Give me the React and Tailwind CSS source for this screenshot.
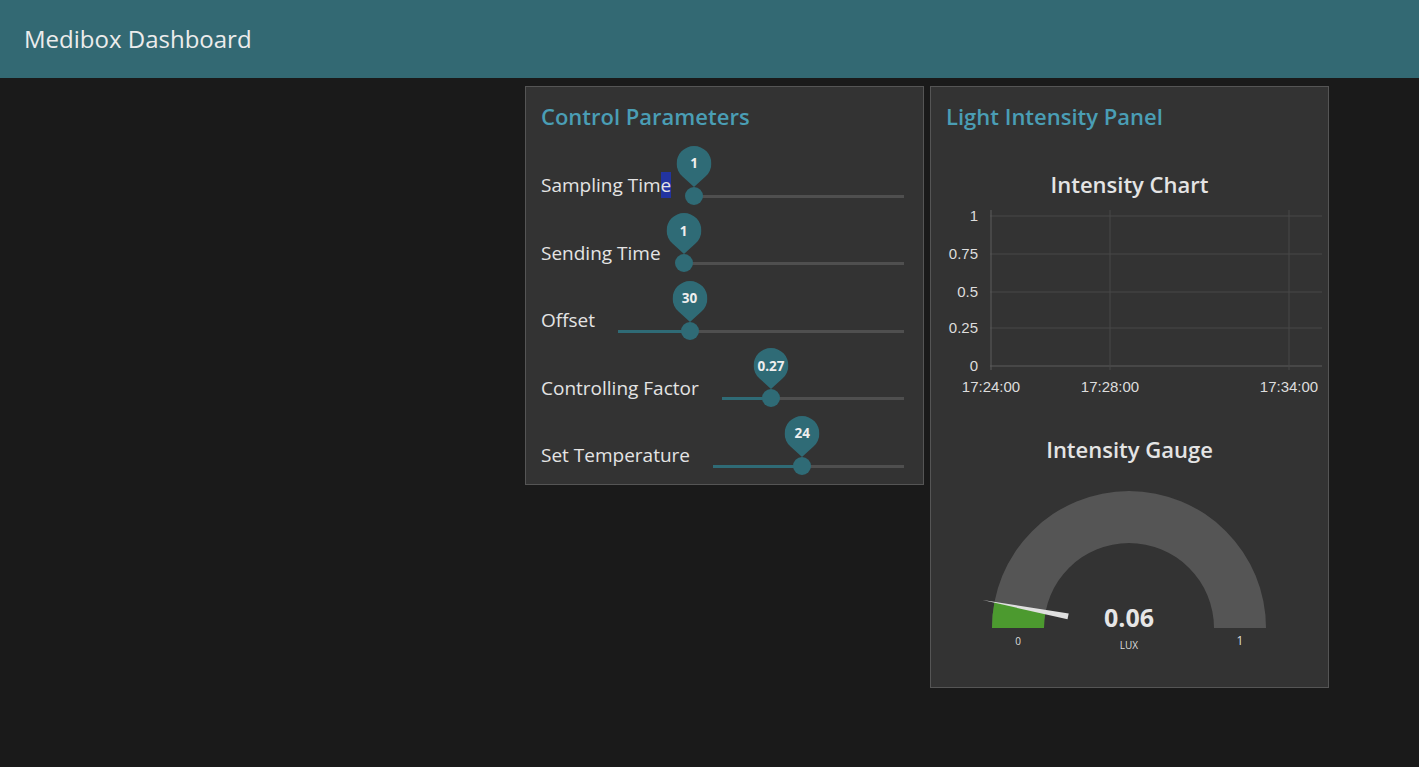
import React from 'react';

const FONT = "font-['Open_Sans','Noto_Sans',sans-serif]";

const sliders = [
  { label: 'Sampling Time', value: '1', pct: 0, highlight: true },
  { label: 'Sending Time', value: '1', pct: 0 },
  { label: 'Offset', value: '30', pct: 25 },
  { label: 'Controlling Factor', value: '0.27', pct: 27 },
  { label: 'Set Temperature', value: '24', pct: 46.7 },
];

function Pin({ value }) {
  return (
    <div className="absolute bottom-full left-1/2 -translate-x-1/2 w-[35px] h-[41px]">
      <svg width="35" height="41" viewBox="0 0 34 40" className="absolute inset-0">
        <path d="M17 40 L5.54 29.56 A17 17 0 1 1 28.46 29.56 Z" fill="#2f6b76" />
      </svg>
      <div className="relative h-[35px] flex items-center justify-center text-[13.5px] font-bold text-[#eeeeee]">
        {value}
      </div>
    </div>
  );
}

function SliderRow({ label, value, pct, highlight }) {
  return (
    <div className="flex items-center h-[67.5px]">
      <div className="text-[19px] leading-[25px] text-[#e4e4e4] whitespace-nowrap">
        {highlight ? (
          <>
            {label.slice(0, -1)}
            <span className="bg-[#2234a0]">{label.slice(-1)}</span>
          </>
        ) : (
          label
        )}
      </div>
      <div className="relative flex-1 h-[18px] mt-[20px] ml-[23px] mr-[19px]">
        <div className="absolute left-0 right-0 top-[8px] h-[3px] bg-[#4f4f4f]" />
        <div className="absolute left-0 top-[8px] h-[3px] bg-[#2f6b76]" style={{ width: `${pct}%` }} />
        <div className="absolute top-0" style={{ left: `${pct}%` }}>
          <div className="relative -translate-x-1/2 w-[18px] h-[18px] rounded-full bg-[#2f6b76]">
            <Pin value={value} />
          </div>
        </div>
      </div>
    </div>
  );
}

function IntensityChart() {
  const ys = [
    { v: '1', y: 12 },
    { v: '0.75', y: 50 },
    { v: '0.5', y: 88 },
    { v: '0.25', y: 124 },
    { v: '0', y: 162 },
  ];
  const xs = [
    { t: '17:24:00', x: 60 },
    { t: '17:28:00', x: 179 },
    { t: '17:34:00', x: 358 },
  ];
  return (
    <svg width="397" height="196" viewBox="0 0 397 196" className="block">
      {ys.map((r) => (
        <line key={r.v} x1="59" x2="391" y1={r.y} y2={r.y} stroke={r.v === '0' ? '#5c5c5c' : '#484848'} strokeWidth="1" />
      ))}
      {xs.map((c) => (
        <line key={c.t} x1={c.x} x2={c.x} y1="6" y2="166" stroke={c.x === 60 ? '#5c5c5c' : '#484848'} strokeWidth="1" />
      ))}
      {ys.map((r) => (
        <text key={r.v} x="47" y={r.y + 5} textAnchor="end" fontSize="15" fill="#dddddd" fontFamily="'Liberation Sans', Arial, sans-serif">
          {r.v}
        </text>
      ))}
      {xs.map((c) => (
        <text key={c.t} x={c.x} y="188" textAnchor="middle" fontSize="15" fill="#dddddd" fontFamily="'Liberation Sans', Arial, sans-serif">
          {c.t}
        </text>
      ))}
    </svg>
  );
}

function IntensityGauge() {
  return (
    <svg width="397" height="180" viewBox="0 0 397 180" className="block">
      <path d="M61 148 A137 137 0 0 1 335 148 L283 148 A85 85 0 0 0 113 148 Z" fill="#555555" />
      <path d="M61 148 A137 137 0 0 1 63.4 122.3 L114.5 132.1 A85 85 0 0 0 113 148 Z" fill="#4c9a2f" />
      <polygon points="51.6,120.1 137.7,133.5 136.5,139.3" fill="#e0e0e0" />
      <text x="198" y="147" textAnchor="middle" fontSize="25" fontWeight="700" fill="#e6e6e6" fontFamily="'Open Sans', 'Noto Sans', sans-serif">
        0.06
      </text>
      <text x="198" y="169" textAnchor="middle" fontSize="10" fill="#dddddd" fontFamily="'Open Sans', 'Noto Sans', sans-serif">
        LUX
      </text>
      <text x="87" y="165" textAnchor="middle" fontSize="10" fill="#dddddd" fontFamily="'Open Sans', 'Noto Sans', sans-serif">
        0
      </text>
      <text x="309" y="165" textAnchor="middle" fontSize="12" fill="#dddddd" fontFamily="'Open Sans', 'Noto Sans', sans-serif">
        1
      </text>
    </svg>
  );
}

export default function App() {
  return (
    <div className={`min-h-screen bg-[#1a1a1a] ${FONT}`}>
      <header className="h-[78px] bg-[#336973] flex items-center pl-[24px]">
        <h1 className="text-[24px] text-[#ececec]">Medibox Dashboard</h1>
      </header>

      <main className="flex items-start gap-[6px] pt-[8px] pl-[525px]">
        {/* control parameters */}
        <section className="w-[399px] h-[399px] bg-[#333333] border border-[#555555] pt-[15px]">
          <h2 className="px-[15px] text-[22px] leading-[29px] font-semibold text-[#4a9eb5]">Control Parameters</h2>
          <div className="mt-[21px] pl-[15px]">
            {sliders.map((s) => (
              <SliderRow key={s.label} {...s} />
            ))}
          </div>
        </section>

        {/* light intensity */}
        <section className="w-[399px] h-[602px] bg-[#333333] border border-[#555555] pt-[15px]">
          <h2 className="px-[15px] text-[22px] leading-[29px] font-semibold text-[#4a9eb5]">Light Intensity Panel</h2>
          <div className="mt-[39px] text-center text-[22px] leading-[28px] font-semibold text-[#e4e4e4]">Intensity Chart</div>
          <div className="mt-[6px]">
            <IntensityChart />
          </div>
          <div className="mt-[35px] text-center text-[22px] leading-[28px] font-semibold text-[#e4e4e4]">Intensity Gauge</div>
          <div className="mt-[17px]">
            <IntensityGauge />
          </div>
        </section>
      </main>
    </div>
  );
}
